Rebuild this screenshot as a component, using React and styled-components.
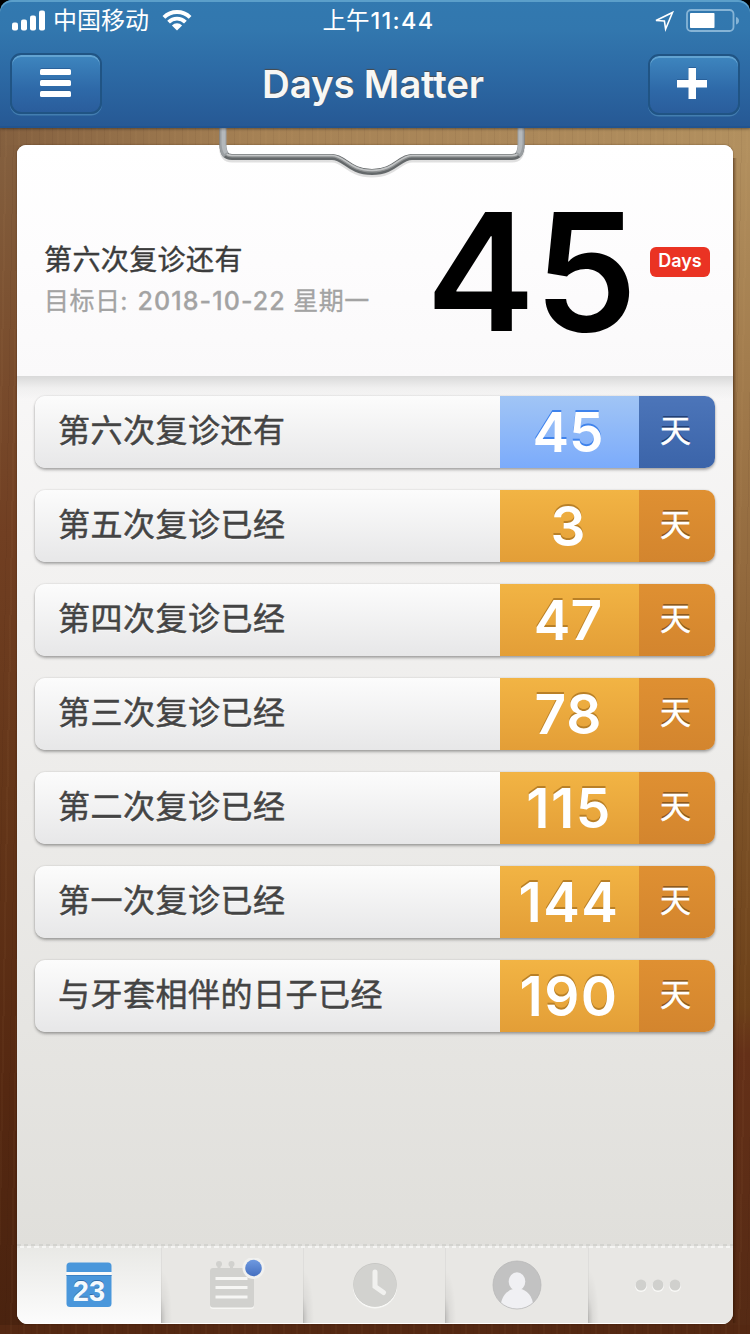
import React from 'react';
import styled, { createGlobalStyle, css } from 'styled-components';

const events = [
  { name: '第六次复诊还有', days: 45, upcoming: true },
  { name: '第五次复诊已经', days: 3 },
  { name: '第四次复诊已经', days: 47 },
  { name: '第三次复诊已经', days: 78 },
  { name: '第二次复诊已经', days: 115 },
  { name: '第一次复诊已经', days: 144 },
  { name: '与牙套相伴的日子已经', days: 190 },
];

function App() {
  return (
    <Screen>
      <GlobalStyle />
      <Header>
        <StatusBar>
          <StatusLeft>
            <svg width="34" height="21" viewBox="0 0 34 21" fill="#fff">
              <rect x="0" y="12.5" width="6" height="8" rx="2" />
              <rect x="9" y="9.5" width="6" height="11" rx="2" />
              <rect x="18" y="5.5" width="6" height="15" rx="2" />
              <rect x="27" y="0.5" width="6" height="20" rx="2" />
            </svg>
            <Carrier>中国移动</Carrier>
            <svg width="30" height="21" viewBox="0 0 30 21">
              <g fill="none" stroke="#fff" strokeWidth="3.9">
                <path d="M1.9 7.4 A18.6 18.6 0 0 1 28.1 7.4" />
                <path d="M6.6 12.1 A12 12 0 0 1 23.4 12.1" />
              </g>
              <path d="M15 20.6 L9.9 15.4 A7.4 7.4 0 0 1 20.1 15.4 Z" fill="#fff" />
            </svg>
          </StatusLeft>
          <Clock>上午<b>11:44</b></Clock>
          <StatusRight>
            <svg width="21" height="22" viewBox="0 0 21 22">
              <path d="M2 10.500 L18.500 2.500 L11.600 19 L10.400 10.900 Z" fill="none" stroke="#fff" strokeWidth="1.6" />
            </svg>
            <svg width="54" height="23" viewBox="0 0 54 23">
              <rect x="2" y="1" width="46.5" height="21" rx="4" fill="none" stroke="#86b4d6" strokeWidth="1.8" />
              <rect x="5" y="4" width="24.5" height="15" rx="0.8" fill="#fff" />
              <path d="M51 8 Q54 9 54 11.8 Q54 14.6 51 15.6 Z" fill="#86b4d6" />
            </svg>
          </StatusRight>
        </StatusBar>
        <NavBar>
          <NavButton>
            <svg width="31" height="28" viewBox="0 0 31 28" fill="#fff">
              <rect width="31" height="6" rx="1.5" />
              <rect y="11" width="31" height="6" rx="1.5" />
              <rect y="22" width="31" height="6" rx="1.5" />
            </svg>
          </NavButton>
          <Title>Days Matter</Title>
          <NavButton $right>
            <svg width="30" height="31" viewBox="0 0 30 31" fill="#fff">
              <path d="M11.5 0h7.500v12h11v7.500H19v11.500h-7.500V19.500H0v-7.500h11.500z" />
            </svg>
          </NavButton>
        </NavBar>
      </Header>

      <Desk>
        <Clip width="310" height="56" viewBox="0 0 310 56">
          <g fill="none" strokeLinejoin="round">
            <path d={wire} stroke="#000" strokeOpacity="0.12" strokeWidth="7" transform="translate(0 2)" />
            <path d={wire} stroke="#64686a" strokeWidth="6" />
            <path d={wire} stroke="#8e9192" strokeWidth="3" transform="translate(0 -1)" />
            <path d={wire} stroke="#c4c6c7" strokeWidth="1.6" transform="translate(0 -1.500)" />
            <path d="M6 0 V16 Q6 24 9 27 M304 0 V16 Q304 24 301 27" stroke="#9a9ea1" strokeWidth="7" />
            <path d="M6.500 0 V16 Q7 22 9 25 M303.500 0 V16 Q303 22 301 25" stroke="#b4b8bb" strokeWidth="4" />
          </g>
        </Clip>
        <Board>
          <Hero>
            <HeroText>
              <HeroName>第六次复诊还有</HeroName>
              <HeroDate>目标日: <span>2018-10-22</span> 星期一</HeroDate>
            </HeroText>
            <HeroNumber>45</HeroNumber>
            <Badge>Days</Badge>
          </Hero>
          <List>
            {events.map((e) => (
              <Row key={e.name}>
                <Name>{e.name}</Name>
                <Count $upcoming={e.upcoming} $wide={e.days > 99}>{e.days}</Count>
                <Unit $upcoming={e.upcoming}>天</Unit>
              </Row>
            ))}
          </List>
          <TabBar>
            <Tab $active>
              <svg width="46" height="46" viewBox="0 0 46 46">
                <path d="M4 0.500h38q3.500 0 3.500 3.500v6H0.500V4q0-3.500 3.500-3.500z" fill="#4a97db" />
                <path d="M0.500 10h45v3H0.500z" fill="#fbfbfa" />
                <path d="M0.500 13h45v28.500q0 3.500-3.500 3.500h-38Q0.500 45 0.500 41.500z" fill="#4a97db" />
                <path d="M0.500 13.500h45" stroke="#3c82c4" strokeWidth="1" />
                <CalendarDay x="23" y="38.500" textAnchor="middle">23</CalendarDay>
              </svg>
            </Tab>
            <Tab $offset={10}>
              <svg width="56" height="54" viewBox="0 0 56 54">
                <rect x="1" y="11" width="44" height="40" rx="3" fill="#f7f7f5" />
                <g fill="#d1d1ce">
                  <rect x="1" y="10" width="44" height="39.500" rx="3" />
                  <circle cx="10" cy="6" r="3" />
                  <circle cx="22.500" cy="6" r="3" />
                  <rect x="8.500" y="6" width="3" height="6" />
                  <rect x="21" y="6" width="3" height="6" />
                </g>
                <path d="M6.500 20.500h32M6.500 29.500h32M6.500 39h32" stroke="#f6f6f4" strokeWidth="3" />
                <circle cx="44.500" cy="10" r="11" fill="#f1f1ef" />
                <circle cx="44.500" cy="10" r="8.300" fill="url(#dot)" />
                <defs>
                  <linearGradient id="dot" x1="0" y1="0" x2="0" y2="1">
                    <stop offset="0" stopColor="#6f9ae0" />
                    <stop offset="1" stopColor="#446fc0" />
                  </linearGradient>
                </defs>
              </svg>
            </Tab>
            <Tab $offset={2}>
              <svg width="46" height="48" viewBox="0 0 46 48">
                <circle cx="23" cy="25.500" r="22" fill="#f8f8f6" />
                <circle cx="23" cy="23.800" r="21.800" fill="#c3c3c0" />
                <circle cx="23" cy="24.200" r="21.500" fill="#d2d2cf" />
                <path d="M23 11v14.500l8.500 6" fill="none" stroke="#f1f1ef" strokeWidth="5" strokeLinecap="round" />
              </svg>
            </Tab>
            <Tab>
              <svg width="50" height="50" viewBox="0 0 50 50">
                <circle cx="25" cy="25" r="24" fill="#c2c2c2" />
                <path d="M9 43C11 33 18 28.500 25 28.500s14 4.500 16 14.500A24 24 0 0 1 9 43z" fill="#f0f0f3" />
                <ellipse cx="25" cy="21.500" rx="8.300" ry="9.300" fill="#f0f0f3" />
                <circle cx="25" cy="25" r="24" fill="none" stroke="#b9b9b9" strokeWidth="0.800" />
              </svg>
            </Tab>
            <Tab $offset={-5}>
              <svg width="48" height="16" viewBox="0 0 48 16">
                <g fill="#f9f9f7">
                  <circle cx="7" cy="9" r="6" />
                  <circle cx="24" cy="9" r="6" />
                  <circle cx="41" cy="9" r="6" />
                </g>
                <g fill="#d0d0cd">
                  <circle cx="7" cy="8" r="5.500" />
                  <circle cx="24" cy="8" r="5.500" />
                  <circle cx="41" cy="8" r="5.500" />
                </g>
              </svg>
            </Tab>
          </TabBar>
        </Board>
      </Desk>
    </Screen>
  );
}

export default App;

// outline of the bent clipboard wire
const wire = 'M5.500 0 V16 Q5.500 29 15 29 H115 C128 29 132 44 155 44 C178 44 182 29 195 29 H295 Q304.500 29 304.500 16 V0';

const GlobalStyle = createGlobalStyle`
* { box-sizing: border-box; }
body {
  margin: 0;
  background: #000;
  font-family: Inter, "Noto Sans CJK SC", sans-serif;
}
svg { display: block; flex: none; }
`;

const Screen = styled.div`
width: 750px;
height: 1334px;
display: flex;
flex-direction: column;
overflow: hidden;
background: #000;
`;

const Header = styled.div`
height: 128px;
position: relative;
z-index: 2;
border-radius: 12px 12px 0 0;
background: linear-gradient(#3279b0 0, #3277ae 30px, #2c69a4 75px, #265894 128px);
box-shadow: inset 0 2px 0 #5b9fca, inset 0 -2px 0 #22548f, 0 1px 3px rgba(0,0,0,0.4);
`;

const StatusBar = styled.div`
height: 41px;
display: grid;
grid-template-columns: 1fr auto 1fr;
align-items: center;
padding: 0 11px 0 12px;
color: #fff;
`;

const StatusLeft = styled.div`
display: flex;
align-items: center;
`;

const Carrier = styled.span`
font-size: 24px;
line-height: 30px;
font-weight: 400;
margin: 1px 13px 0 7px;
`;

const Clock = styled.div`
font-size: 23.5px;
line-height: 30px;
margin-left: 6px;
white-space: nowrap;

>b {
  margin-left: 1px;
  font-size: 23.5px;
  font-weight: 500;
  letter-spacing: 1.3px;
}
`;

const StatusRight = styled.div`
display: flex;
align-items: center;
justify-content: flex-end;
gap: 10px;
`;

const NavBar = styled.div`
height: 87px;
display: flex;
justify-content: space-between;
padding: 12px 10px 0;
`;

const NavButton = styled.div`
width: 92px;
height: 61px;
display: flex;
align-items: center;
justify-content: center;
margin-top: ${(p) => (p.$right ? '1px' : '0')};
padding-right: ${(p) => (p.$right ? '3px' : '1px')};
padding-bottom: ${(p) => (p.$right ? '3px' : '1px')};
border: 2px solid #205484;
border-radius: 11px;
background: linear-gradient(#3e86bf, #2e69a8 60%, #2a5d9c);
box-shadow: inset 0 2px 0 #62a3d2, 0 1.500px 0 #437eb0;

svg { filter: drop-shadow(0 -1px 0 #2a619a); }
`;

const Title = styled.div`
font-size: 38.5px;
line-height: 46px;
font-weight: 600;
color: #f7f7f5;
margin: 8px 4px 0 0;
letter-spacing: -0.2px;
text-shadow: 0 -1px 1px #4a4a4a;
`;

const Desk = styled.div`
height: 1206px;
position: relative;
padding: 17px 17px 10px;
background:
  repeating-linear-gradient(91deg, rgba(40,10,0,0.05) 0 1px, transparent 1px 5px, rgba(255,200,140,0.03) 5px 7px, transparent 7px 13px),
  linear-gradient(90deg, #84603f, #a68255 35%, #ab885a 70%, #b2905f) 0 0 / 100% 17px no-repeat,
  linear-gradient(#84603f, #7b5030 15%, #713f22 33%, #643619 55%, #552811 80%, #4a230f) 0 17px / 30px 1180px no-repeat,
  linear-gradient(90deg, rgba(50,20,0,0.45), transparent 4px) 100% 30px / 17px 1165px no-repeat,
  linear-gradient(#b2905f, #a37d4e 18%, #936a3e 36%, #7e5429 54%, #6c4019 73%, #643018 77%, #552a14) 100% 17px / 30px 1180px no-repeat,
  #542812;
`;

// the wire lies over both the desk and the paper
const Clip = styled.svg`
position: absolute;
top: 0;
left: 217px;
z-index: 1;
`;

const Board = styled.div`
height: 1179px;
display: flex;
flex-direction: column;
overflow: hidden;
border-radius: 9px 9px 11px 11px;
background: linear-gradient(#f8f7f7 231px, #e0dfdb 1100px);
box-shadow: 0 0 2px rgba(40,15,0,0.5);
`;

const Hero = styled.div`
height: 231px;
flex: none;
display: flex;
padding-left: 27px;
background: linear-gradient(#fff, #fdfcfd 50%, #faf9fa);
`;

const HeroText = styled.div`
width: 382px;
padding-top: 95px;
white-space: nowrap;
`;

const HeroName = styled.div`
font-size: 28px;
line-height: 40px;
letter-spacing: 0.4px;
font-weight: 400;
color: #3c3c3c;
-webkit-text-stroke: 0.4px #3c3c3c;
`;

const HeroDate = styled.div`
font-size: 25px;
line-height: 42px;
letter-spacing: 0.45px;
color: #a3a3a3;
font-weight: 400;
-webkit-text-stroke: 0.3px #a3a3a3;

span {
  margin-left: 2px;
  font-weight: 500;
  letter-spacing: 1.1px;
}
`;

const HeroNumber = styled.div`
width: 207px;
margin-top: 27px;
font-size: 164px;
line-height: 199px;
font-weight: 600;
letter-spacing: -1px;
color: #000;
`;

const Badge = styled.div`
width: 60px;
height: 30px;
margin: 102px 0 0 17px;
border-radius: 6px;
background: #ea3323;
color: #fff;
font-size: 18px;
line-height: 27px;
font-weight: 600;
text-align: center;
`;

const List = styled.div`
flex: 1;
display: flex;
flex-direction: column;
gap: 22px;
padding: 20px 18px 0;
background: linear-gradient(#d9d9d9, rgba(235,235,235,0.6) 12px, transparent 24px);
`;

const Row = styled.div`
height: 72px;
flex: none;
display: grid;
grid-template-columns: 465px 139px 76px;
border-radius: 10px;
overflow: hidden;
box-shadow: 0 2px 3px rgba(0,0,0,0.3), 0 0 2px rgba(0,0,0,0.15);
`;

const Name = styled.div`
padding-left: 23px;
font-size: 32px;
line-height: 70px;
letter-spacing: 0.5px;
color: #444;
-webkit-text-stroke: 0.5px #444;
text-shadow: 0 1px 0 #fff;
background: linear-gradient(#fcfcfc, #e7e7e8);
`;

const cell = css`
color: #fff;
text-align: center;
`;

const Count = styled.div`
${cell}
padding-right: ${(p) => (p.$wide ? '1px' : '3px')};
font-size: 55px;
line-height: 72px;
font-weight: 600;
font-kerning: none;
letter-spacing: ${(p) => (p.$wide ? '1.5px' : '0')};
text-shadow: 0 -2px 0 ${(p) => (p.$upcoming ? '#3f83ec' : '#b98027')};
background: ${(p) => (p.$upcoming ? 'linear-gradient(#a1c5f5, #7babfb)' : 'linear-gradient(#f2b444, #e39e37)')};
`;

const Unit = styled.div`
${cell}
padding-right: 3px;
font-size: 31px;
line-height: 70px;
-webkit-text-stroke: 0.4px #fff;
text-shadow: 0 -2px 0 ${(p) => (p.$upcoming ? '#213f75' : '#8d5a1e')};
background: ${(p) => (p.$upcoming ? 'linear-gradient(#4c75b9, #3b64a9)' : 'linear-gradient(#df9032, #d3852e)')};
`;

const TabBar = styled.div`
height: 80px;
flex: none;
display: grid;
grid-template-columns: 144px 142px 142px 143px 145px;
border-bottom: 1px solid #fff;
background:
  repeating-linear-gradient(90deg, #d3d3cf 0 4px, #e2e1de 4px 7.200px) 0 0 / 100% 2px no-repeat,
  repeating-linear-gradient(90deg, #e5e4e1 0 3px, #f5f5f3 3px 7.200px) 0 2px / 100% 2px no-repeat,
  #e8e7e4;
`;

const Tab = styled.div`
display: flex;
align-items: center;
justify-content: center;
margin-top: 4px;
padding-bottom: 1px;
padding-left: ${(p) => Math.max(p.$offset || 0, 0)}px;
padding-right: ${(p) => Math.max(-(p.$offset || 0), 0)}px;
background: ${(p) => (p.$active ? 'linear-gradient(#e9e9e6, #fcfcfc)' : 'radial-gradient(ellipse 11px 50px at 0 95%, rgba(0,0,0,0.18), rgba(0,0,0,0.05) 45%, transparent)')};
box-shadow: inset 1px 0 0 ${(p) => (p.$active ? 'transparent' : 'rgba(0,0,0,0.04)')};
`;

const CalendarDay = styled.text`
font-family: "Liberation Sans", Arial, sans-serif;
font-size: 29px;
font-weight: 700;
fill: #f4f9fd;
text-shadow: 0 -1px 0 #2f6ba8;
`;
